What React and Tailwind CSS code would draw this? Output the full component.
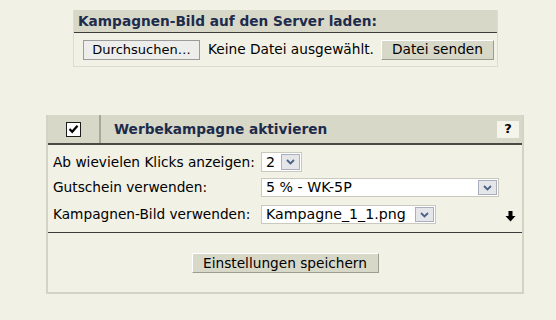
import React from "react";

function Chevron() {
  return (
    <svg width="9" height="6" viewBox="0 0 9 6">
      <path d="M1 1 L4.5 4.5 L8 1" fill="none" stroke="#4d6185" strokeWidth="1.8" />
    </svg>
  );
}

function Select({ value, width, height = "h-[20px]" }) {
  return (
    <div className={`flex items-stretch ${width} ${height} border border-[#c9c9bd] bg-white`}>
      <div className="flex-1 pl-[4px] flex items-center text-[14.2px] text-black leading-none">{value}</div>
      <div className="w-[19px] m-[1px] flex items-center justify-center border border-[#a9afbd] bg-[#e4e6ea]">
        <Chevron />
      </div>
    </div>
  );
}

export default function App() {
  return (
    <div
      className="w-[556px] h-[320px] bg-[#f1f1e6] overflow-hidden"
      style={{ fontFamily: '"DejaVu Sans", Verdana, sans-serif' }}
    >
      {/* Upload box */}
      <div className="ml-[73px] mt-[10px] w-[425px] border-x border-b border-[#dcdcd0]">
        <div className="h-[23px] bg-[#d8d8c8] border-b border-[#3c3c3c] pl-[4px] flex items-center text-[13.7px] font-bold text-[#1d2b4c]">
          Kampagnen-Bild auf den Server laden:
        </div>
        <div className="h-[33px] flex items-center pl-[9px] text-[13.7px] text-black">
          <div className="w-[117px] h-[20px] border border-[#9c9c9c] bg-[#ededeb] flex items-center justify-center text-[13px]">
            Durchsuchen…
          </div>
          <div className="ml-[8px] w-[173px] whitespace-nowrap">Keine Datei ausgewählt.</div>
          <div className="w-[113px] h-[20px] border border-[#9c9c90] border-t-white border-l-white bg-[#d8d8c8] flex items-center justify-center">
            Datei senden
          </div>
        </div>
      </div>

      {/* Campaign panel */}
      <div className="ml-[46px] mt-[48px] w-[478px] h-[179px] border-x-2 border-b-2 border-[#d4d4c6] flex flex-col">
        <div className="h-[30px] bg-[#d8d8c8] flex items-stretch border-b-2 border-[#4a4a44]">
          <div className="w-[53px] flex items-center justify-center border-r-2 border-[#a8a89a]">
            <div className="w-[15px] h-[15px] border border-[#1c1c1c] bg-white flex items-center justify-center">
              <svg width="11" height="10" viewBox="0 0 11 10">
                <path d="M1.5 5 L4.2 7.8 L9.5 1.8" fill="none" stroke="#000" strokeWidth="2.2" />
              </svg>
            </div>
          </div>
          <div className="flex-1 pl-[13px] flex items-center text-[13.7px] font-bold text-[#1d2b4c]">
            Werbekampagne aktivieren
          </div>
          <div className="flex items-center pr-[3px]">
            <div className="w-[22px] h-[17px] bg-[#f4f4ea] flex items-center justify-center text-[13px] font-bold text-black">
              ?
            </div>
          </div>
        </div>

        <div className="flex flex-col pl-[5px] pt-[7px] pb-[8px] text-[13.7px] leading-[19px] text-black border-b border-[#3c3c3c]">
          <div className="flex items-center">
            <div className="w-[208px] whitespace-nowrap">Ab wievielen Klicks anzeigen:</div>
            <Select value="2" width="w-[41px]" />
          </div>
          <div className="flex items-center mt-[6px]">
            <div className="w-[208px]">Gutschein verwenden:</div>
            <Select value="5 % - WK-5P" width="w-[238px]" height="h-[19px]" />
          </div>
          <div className="flex items-center mt-[8px]">
            <div className="w-[208px]">Kampagnen-Bild verwenden:</div>
            <Select value="Kampagne_1_1.png" width="w-[175px]" height="h-[19px]" />
            <div className="ml-auto mr-[6px] mt-[4px]">
              <svg width="11" height="11" viewBox="0 0 11 11">
                <path d="M3.5 0 H7.5 V5 H10.5 L5.5 10.5 L0.5 5 H3.5 Z" fill="#000" />
              </svg>
            </div>
          </div>
        </div>

        <div className="flex-1 flex justify-center pt-[20px]">
          <div className="w-[187px] h-[20px] border border-[#9c9c90] border-t-white border-l-white bg-[#d8d8c8] flex items-center justify-center text-[13.7px] text-black">
            Einstellungen speichern
          </div>
        </div>
      </div>
    </div>
  );
}
